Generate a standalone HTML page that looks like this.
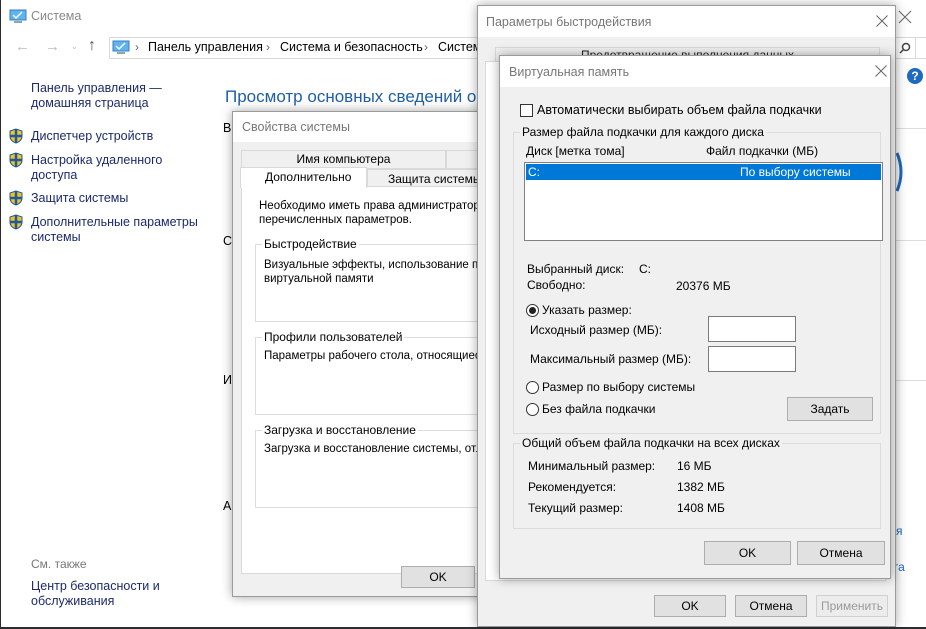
<!DOCTYPE html>
<html><head><meta charset="utf-8">
<style>
*{margin:0;padding:0;box-sizing:border-box}
body{width:926px;height:629px;overflow:hidden;background:#2d2d30;font-family:"Liberation Sans","Noto Sans CJK SC",sans-serif;font-size:12px;color:#000;position:relative}
.a{position:absolute;white-space:nowrap}
.win{position:absolute;left:0;top:0;width:926px;height:627px;background:#fff;border-left:1px solid #2b2b2b}
.link{color:#1c2a6b;font-size:12.5px;line-height:15px}
.dlg{position:absolute;background:#f0f0f0;border:1px solid #9a9a9a;box-shadow:0 0 10px rgba(0,0,0,.35)}
.tb{position:absolute;left:0;top:0;right:0;background:#fff}
.ttl{color:#777;font-size:12.5px}
.btn{position:absolute;background:#e1e1e1;border:1px solid #adadad;text-align:center;font-size:12px}
.grp{position:absolute;border:1px solid #dcdcdc}
.gl{position:absolute;background:inherit;padding:0 2px;top:-8px;left:6px}
.rad{position:absolute;width:13px;height:13px;border:1px solid #333;border-radius:50%;background:#fff}
.inp{position:absolute;background:#fff;border:1px solid #7a7a7a}
</style></head><body>
<div class="win">
  <svg class="a" style="left:8px;top:9px" width="18" height="15"><rect x="1" y="1" width="16" height="10" fill="#5eb3f0" stroke="#3a7fc0"/><path d="M4 6l3 3 6-6" stroke="#fff" stroke-width="1.5" fill="none"/><rect x="5" y="12" width="8" height="2" fill="#8aa"/></svg>
  <div class="a" style="left:30px;top:9px;color:#888;font-size:12.5px">Система</div>
  <div class="a" style="left:14px;top:38px;color:#bbb;font-size:15px">←</div>
  <div class="a" style="left:44px;top:38px;color:#bbb;font-size:15px">→</div>
  <div class="a" style="left:70px;top:42px;color:#bbb;font-size:8px">⌄</div>
  <div class="a" style="left:87px;top:37px;color:#555;font-size:16px">↑</div>
  <div class="a" style="left:108px;top:37px;width:830px;height:22px;border:1px solid #d9d9d9"></div>
  <svg class="a" style="left:111px;top:40px" width="18" height="15"><rect x="1" y="1" width="16" height="10" fill="#5eb3f0" stroke="#3a7fc0"/><path d="M4 6l3 3 6-6" stroke="#fff" stroke-width="1.5" fill="none"/><rect x="5" y="12" width="8" height="2" fill="#8aa"/></svg>
  <div class="a" style="left:134px;top:40px;color:#666">›</div>
  <div class="a" style="left:147px;top:40px;font-size:12.5px">Панель управления</div>
  <div class="a" style="left:265px;top:40px;color:#666">›</div>
  <div class="a" style="left:279px;top:40px;font-size:12.5px">Система и безопасность</div>
  <div class="a" style="left:423px;top:40px;color:#666">›</div>
  <div class="a" style="left:437px;top:40px;font-size:12.5px">Систем</div>
  <svg class="a" style="left:897px;top:10px" width="14" height="14"><path d="M1 1L13 13M13 1L1 13" stroke="#666" stroke-width="1"/></svg>
  <div class="a" style="left:895px;top:37px;width:20px;height:22px;border:1px solid #d9d9d9;border-left:none"></div>
  <svg class="a" style="left:898px;top:42px" width="12" height="12"><circle cx="7" cy="5" r="3.5" stroke="#444" fill="none" stroke-width="1.5"/><path d="M4.5 7.5L1 11" stroke="#444" stroke-width="1.5"/></svg>
  <div class="a" style="left:906px;top:68px;width:16px;height:16px;border-radius:50%;background:#1e6ac0;color:#fff;font-weight:bold;font-size:12px;text-align:center;line-height:16px">?</div>
  <div class="a" style="left:893px;top:128px;width:33px;border-top:1px solid #ddd"></div>
  <svg class="a" style="left:893px;top:150px" width="14" height="45"><path d="M3 3Q11 22 3 41" stroke="#1e6ac0" stroke-width="3" fill="none"/></svg>
  <div class="a" style="left:893px;top:240px;width:33px;border-top:1px solid #ddd"></div>
  <div class="a" style="left:893px;top:380px;width:33px;border-top:1px solid #ddd"></div>
  <div class="a" style="left:895px;top:524px;color:#1e6ac0">я</div>
  <div class="a" style="left:893px;top:560px;color:#1e6ac0">га</div>

  <div class="a link" style="left:30px;top:81px">Панель управления —<br>домашняя страница</div>
  <svg class="a" style="left:8px;top:128px" width="14" height="16"><path d="M7 1L1 3v5c0 4 3 6 6 7 3-1 6-3 6-7V3z" fill="#f5c21a" stroke="#1c5aa6"/><path d="M7 1v14M1 8h12" stroke="#1c5aa6" stroke-width="2.5"/></svg>
  <div class="a link" style="left:30px;top:129px">Диспетчер устройств</div>
  <svg class="a" style="left:8px;top:152px" width="14" height="16"><path d="M7 1L1 3v5c0 4 3 6 6 7 3-1 6-3 6-7V3z" fill="#f5c21a" stroke="#1c5aa6"/><path d="M7 1v14M1 8h12" stroke="#1c5aa6" stroke-width="2.5"/></svg>
  <div class="a link" style="left:30px;top:153px">Настройка удаленного<br>доступа</div>
  <svg class="a" style="left:8px;top:190px" width="14" height="16"><path d="M7 1L1 3v5c0 4 3 6 6 7 3-1 6-3 6-7V3z" fill="#f5c21a" stroke="#1c5aa6"/><path d="M7 1v14M1 8h12" stroke="#1c5aa6" stroke-width="2.5"/></svg>
  <div class="a link" style="left:30px;top:191px">Защита системы</div>
  <svg class="a" style="left:8px;top:214px" width="14" height="16"><path d="M7 1L1 3v5c0 4 3 6 6 7 3-1 6-3 6-7V3z" fill="#f5c21a" stroke="#1c5aa6"/><path d="M7 1v14M1 8h12" stroke="#1c5aa6" stroke-width="2.5"/></svg>
  <div class="a link" style="left:30px;top:215px">Дополнительные параметры<br>системы</div>
  <div class="a" style="left:30px;top:557px;color:#777;font-size:12px">См. также</div>
  <div class="a link" style="left:30px;top:579px">Центр безопасности и<br>обслуживания</div>

  <div class="a" style="left:224px;top:87px;color:#1e5fa8;font-size:17px">Просмотр основных сведений о ва</div>
  <div class="a" style="left:222px;top:121px;font-size:12.5px">В</div>
  <div class="a" style="left:222px;top:234px;font-size:12.5px">С</div>
  <div class="a" style="left:222px;top:373px;font-size:12.5px">И</div>
  <div class="a" style="left:222px;top:499px;font-size:12.5px">А</div>
</div>

<!-- Свойства системы -->
<div class="dlg" style="left:232px;top:111px;width:260px;height:486px">
  <div class="tb" style="height:30px"><div class="a ttl" style="left:9px;top:8px">Свойства системы</div></div>
  <div class="a" style="left:8px;top:38px;width:205px;height:19px;border:1px solid #d9d9d9;text-align:center;line-height:17px">Имя компьютера</div>
  <div class="a" style="left:213px;top:38px;width:60px;height:19px;border:1px solid #d9d9d9"></div>
  <div class="a" style="left:8px;top:74px;width:250px;height:388px;background:#fff;border:1px solid #d9d9d9"></div>
  <div class="a" style="left:7px;top:55px;width:127px;height:21px;background:#fff;border:1px solid #d9d9d9;border-bottom:none;padding:2px 0 0 24px">Дополнительно</div>
  <div class="a" style="left:134px;top:57px;width:120px;height:18px;border:1px solid #d9d9d9;padding:2px 0 0 20px">Защита системы</div>
  <div class="a" style="left:26px;top:87px;line-height:14px;font-size:11.5px">Необходимо иметь права администратора<br>перечисленных параметров.</div>
  <div class="grp" style="left:22px;top:132px;width:240px;height:78px;background:#fff"><div class="gl">Быстродействие</div><div class="a" style="left:8px;top:13px;line-height:14px;font-size:11.5px">Визуальные эффекты, использование про<br>виртуальной памяти</div></div>
  <div class="grp" style="left:22px;top:225px;width:240px;height:78px;background:#fff"><div class="gl">Профили пользователей</div><div class="a" style="left:8px;top:12px;font-size:11.5px">Параметры рабочего стола, относящиеся</div></div>
  <div class="grp" style="left:22px;top:318px;width:240px;height:78px;background:#fff"><div class="gl">Загрузка и восстановление</div><div class="a" style="left:8px;top:12px;font-size:11.5px">Загрузка и восстановление системы, отл</div></div>
  <div class="btn" style="left:168px;top:454px;width:74px;height:22px;line-height:20px">OK</div>
</div>

<!-- Параметры быстродействия -->
<div class="dlg" style="left:477px;top:5px;width:419px;height:622px">
  <div class="tb" style="height:31px"><div class="a ttl" style="left:8px;top:9px">Параметры быстродействия</div>
    <svg class="a" style="left:398px;top:9px" width="12" height="12"><path d="M0.5 0.5L11.5 11.5M11.5 0.5L0.5 11.5" stroke="#666" stroke-width="1"/></svg></div>
  <div class="a" style="left:17px;top:41px;width:385px;height:20px;border:1px solid #d9d9d9;text-align:center;color:#222">Предотвращение выполнения данных</div>
  <div class="a" style="left:7px;top:55px;width:401px;height:520px;background:#fff;border:1px solid #d9d9d9"></div>
  <div class="btn" style="left:176px;top:589px;width:72px;height:22px;line-height:20px">OK</div>
  <div class="btn" style="left:257px;top:589px;width:72px;height:22px;line-height:20px">Отмена</div>
  <div class="btn" style="left:338px;top:589px;width:72px;height:22px;line-height:20px;color:#9a9a9a;background:#ececec;border-color:#d0d0d0">Применить</div>
</div>

<!-- Виртуальная память -->
<div class="dlg" style="left:499px;top:55px;width:392px;height:524px">
  <div class="tb" style="height:31px"><div class="a ttl" style="left:9px;top:9px">Виртуальная память</div>
    <svg class="a" style="left:375px;top:9px" width="12" height="12"><path d="M0.5 0.5L11.5 11.5M11.5 0.5L0.5 11.5" stroke="#666" stroke-width="1"/></svg></div>
  <div class="a" style="left:20px;top:48px;width:13px;height:13px;border:1px solid #333;background:#fff"></div>
  <div class="a" style="left:37px;top:47px;font-size:12.5px">Автоматически выбирать объем файла подкачки</div>
  <div class="grp" style="left:13px;top:76px;width:368px;height:302px;background:#f0f0f0">
    <div class="gl" style="top:-8px">Размер файла подкачки для каждого диска</div>
    <div class="a" style="left:12px;top:11px">Диск [метка тома]</div>
    <div class="a" style="left:192px;top:11px">Файл подкачки (МБ)</div>
    <div class="a" style="left:10px;top:29px;width:359px;height:79px;background:#fff;border:1px solid #828282">
      <div class="a" style="left:1px;top:1px;width:355px;height:16px;background:#0078d7;color:#fff"><span class="a" style="left:2px;top:1px">C:</span><span class="a" style="left:214px;top:1px">По выбору системы</span></div>
    </div>
    <div class="a" style="left:13px;top:129px">Выбранный диск:</div>
    <div class="a" style="left:125px;top:129px">C:</div>
    <div class="a" style="left:13px;top:145px">Свободно:</div>
    <div class="a" style="left:162px;top:146px">20376 МБ</div>
    <div class="rad" style="left:12px;top:171px"><div class="a" style="left:2px;top:2px;width:7px;height:7px;border-radius:50%;background:#222"></div></div>
    <div class="a" style="left:28px;top:170px">Указать размер:</div>
    <div class="a" style="left:16px;top:190px">Исходный размер (МБ):</div>
    <div class="inp" style="left:194px;top:183px;width:88px;height:26px"></div>
    <div class="a" style="left:16px;top:219px">Максимальный размер (МБ):</div>
    <div class="inp" style="left:194px;top:213px;width:88px;height:26px"></div>
    <div class="rad" style="left:12px;top:248px"></div>
    <div class="a" style="left:28px;top:247px">Размер по выбору системы</div>
    <div class="rad" style="left:12px;top:270px"></div>
    <div class="a" style="left:28px;top:269px">Без файла подкачки</div>
    <div class="btn" style="left:273px;top:264px;width:86px;height:24px;line-height:22px">Задать</div>
  </div>
  <div class="grp" style="left:13px;top:387px;width:368px;height:86px;background:#f0f0f0">
    <div class="gl">Общий объем файла подкачки на всех дисках</div>
    <div class="a" style="left:14px;top:15px">Минимальный размер:</div><div class="a" style="left:163px;top:15px">16 МБ</div>
    <div class="a" style="left:14px;top:36px">Рекомендуется:</div><div class="a" style="left:163px;top:36px">1382 МБ</div>
    <div class="a" style="left:14px;top:57px">Текущий размер:</div><div class="a" style="left:163px;top:57px">1408 МБ</div>
  </div>
  <div class="btn" style="left:204px;top:485px;width:87px;height:24px;line-height:22px">OK</div>
  <div class="btn" style="left:297px;top:485px;width:88px;height:24px;line-height:22px">Отмена</div>
</div>
</body></html>
